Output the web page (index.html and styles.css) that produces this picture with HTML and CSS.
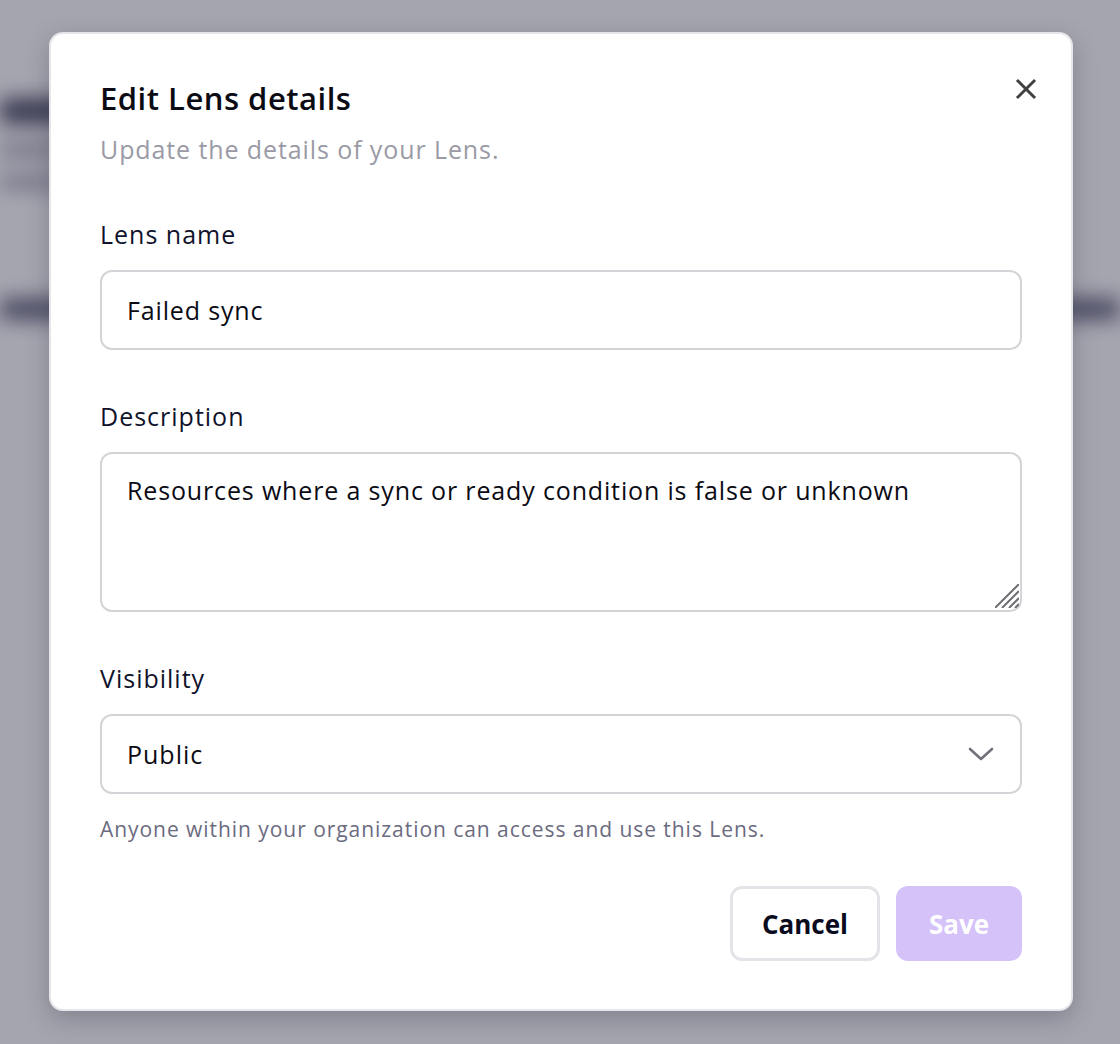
FILE: index.html
```html
<!DOCTYPE html>
<html lang="en">
<head>
<meta charset="utf-8">
<title>Edit Lens details</title>
<link rel="stylesheet" href="styles.css">
</head>
<body>
<div class="page" aria-hidden="true">
  <div class="bg-head">
    <span class="bg-bar bg-bar-title"></span>
    <span class="bg-bar bg-bar-line"></span>
    <span class="bg-bar bg-bar-line short"></span>
  </div>
  <div class="bg-row">
    <span class="bg-bar bg-bar-cell"></span>
    <span class="bg-bar bg-bar-cell"></span>
  </div>
</div>
<div class="overlay">
  <div class="modal" role="dialog" aria-labelledby="modal-title">
    <button class="close" type="button" aria-label="Close">
      <svg width="22" height="22" viewBox="0 0 22 22" fill="none" stroke="#404040" stroke-width="3" stroke-linecap="square"><path d="M3 3 L19 19 M19 3 L3 19"/></svg>
    </button>
    <header class="modal-head">
      <h2 id="modal-title" class="title">Edit Lens details</h2>
      <p class="subtitle">Update the details of your Lens.</p>
    </header>
    <form class="form">
      <div class="field">
        <label class="label" for="lens-name">Lens name</label>
        <input class="control" id="lens-name" type="text" value="Failed sync">
      </div>
      <div class="field">
        <label class="label" for="lens-desc">Description</label>
        <div class="area-wrap">
          <textarea class="control area" id="lens-desc">Resources where a sync or ready condition is false or unknown</textarea>
          <svg class="grip" width="24" height="24" viewBox="0 0 24 24" fill="none" stroke="#6e6e74" stroke-width="2"><path d="M0 24 L24 0 M7 24 L24 7 M14 24 L24 14 M20 24 L24 20"/></svg>
        </div>
      </div>
      <div class="field">
        <label class="label" for="lens-vis">Visibility</label>
        <div class="select">
          <span class="select-value" id="lens-vis">Public</span>
          <svg class="chevron" width="26" height="14" viewBox="0 0 26 14" fill="none" stroke="#71717a" stroke-width="2.6" stroke-linecap="round" stroke-linejoin="round"><path d="M2 2 L13 12 L24 2"/></svg>
        </div>
        <p class="help">Anyone within your organization can access and use this Lens.</p>
      </div>
      <div class="actions">
        <button class="btn btn-cancel" type="button">Cancel</button>
        <button class="btn btn-save" type="button">Save</button>
      </div>
    </form>
  </div>
</div>
</body>
</html>
```

FILE: styles.css
```css
* { box-sizing: border-box; }
html, body { margin: 0; height: 100%; }
body {
  font-family: "Open Sans", "Noto Sans", sans-serif;
  background: #ffffff;
  position: relative;
  overflow: hidden;
  width: 1120px;
  height: 1044px;
}
.page {
  filter: blur(10px);
  padding: 98px 0 0 0;
  height: 100%;
  overflow: hidden;
}
.bg-head {
  display: flex;
  flex-direction: column;
  align-items: flex-start;
  gap: 20px;
}
.bg-bar { display: block; background: #2a2a48; border-radius: 6px; }
.bg-bar-title { width: 130px; height: 26px; }
.bg-bar-line { width: 90px; height: 12px; background: #8a8aa0; }
.bg-bar-line.short { width: 70px; }
.bg-row {
  display: flex;
  justify-content: space-between;
  margin-top: 110px;
}
.bg-bar-cell { width: 80px; height: 22px; background: #4a4a68; }
.overlay {
  position: absolute;
  inset: 0;
  background: rgba(75, 75, 95, 0.5);
}
.modal {
  position: absolute;
  left: 49px;
  top: 32px;
  width: 1024px;
  height: 979px;
  background: #ffffff;
  border: 2px solid #e6e6ea;
  border-radius: 14px;
  box-shadow: 0 8px 24px rgba(30, 30, 50, 0.25);
  padding: 38px 49px 0 49px;
}
.close {
  position: absolute;
  top: 42px;
  right: 32px;
  width: 26px;
  height: 26px;
  padding: 2px;
  border: 0;
  background: none;
  cursor: pointer;
}
.modal-head { margin-bottom: 49px; }
.title {
  margin: 0;
  font-size: 31px;
  font-weight: 600;
  color: #0b0b14;
  line-height: 52px;
  letter-spacing: 0.5px;
}
.subtitle {
  margin: 7px 0 0 0;
  font-size: 25px;
  color: #9a9aa6;
  line-height: 36px;
  letter-spacing: 0.9px;
}
.form { display: flex; flex-direction: column; gap: 48px; }
.field { display: flex; flex-direction: column; }
.label {
  font-size: 25px;
  font-weight: 500;
  color: #10122b;
  line-height: 36px;
  margin-bottom: 18px;
  letter-spacing: 1px;
}
.control {
  width: 100%;
  height: 80px;
  border: 2px solid #d4d4d8;
  border-radius: 12px;
  padding: 0 25px;
  font-family: inherit;
  font-size: 25px;
  letter-spacing: 0.85px;
  color: #0b0b14;
  background: #ffffff;
  outline: none;
}
.area-wrap { position: relative; }
.area {
  height: 160px;
  padding: 18px 25px;
  line-height: 36px;
  resize: none;
  display: block;
}
.grip {
  position: absolute;
  right: 3px;
  bottom: 4px;
  pointer-events: none;
}
.select {
  height: 80px;
  border: 2px solid #d4d4d8;
  border-radius: 12px;
  padding: 0 26px 0 25px;
  display: flex;
  align-items: center;
  justify-content: space-between;
}
.select-value { font-size: 25px; letter-spacing: 1px; color: #0b0b14; }
.help {
  margin: 21px 0 0 0;
  font-size: 21px;
  line-height: 28px;
  letter-spacing: 0.95px;
  color: #6b6b80;
}
.actions {
  display: flex;
  justify-content: flex-end;
  gap: 16px;
  margin-top: -5px;
}
.btn {
  height: 75px;
  border-radius: 12px;
  font-family: inherit;
  font-size: 26px;
  font-weight: 700;
  padding: 0;
}
.btn-cancel {
  background: #ffffff;
  border: 3px solid #e4e4e8;
  color: #0b0b1e;
  width: 150px;
}
.btn-save {
  background: #d4c2f9;
  border: 0;
  color: #ffffff;
  width: 126px;
}
```
